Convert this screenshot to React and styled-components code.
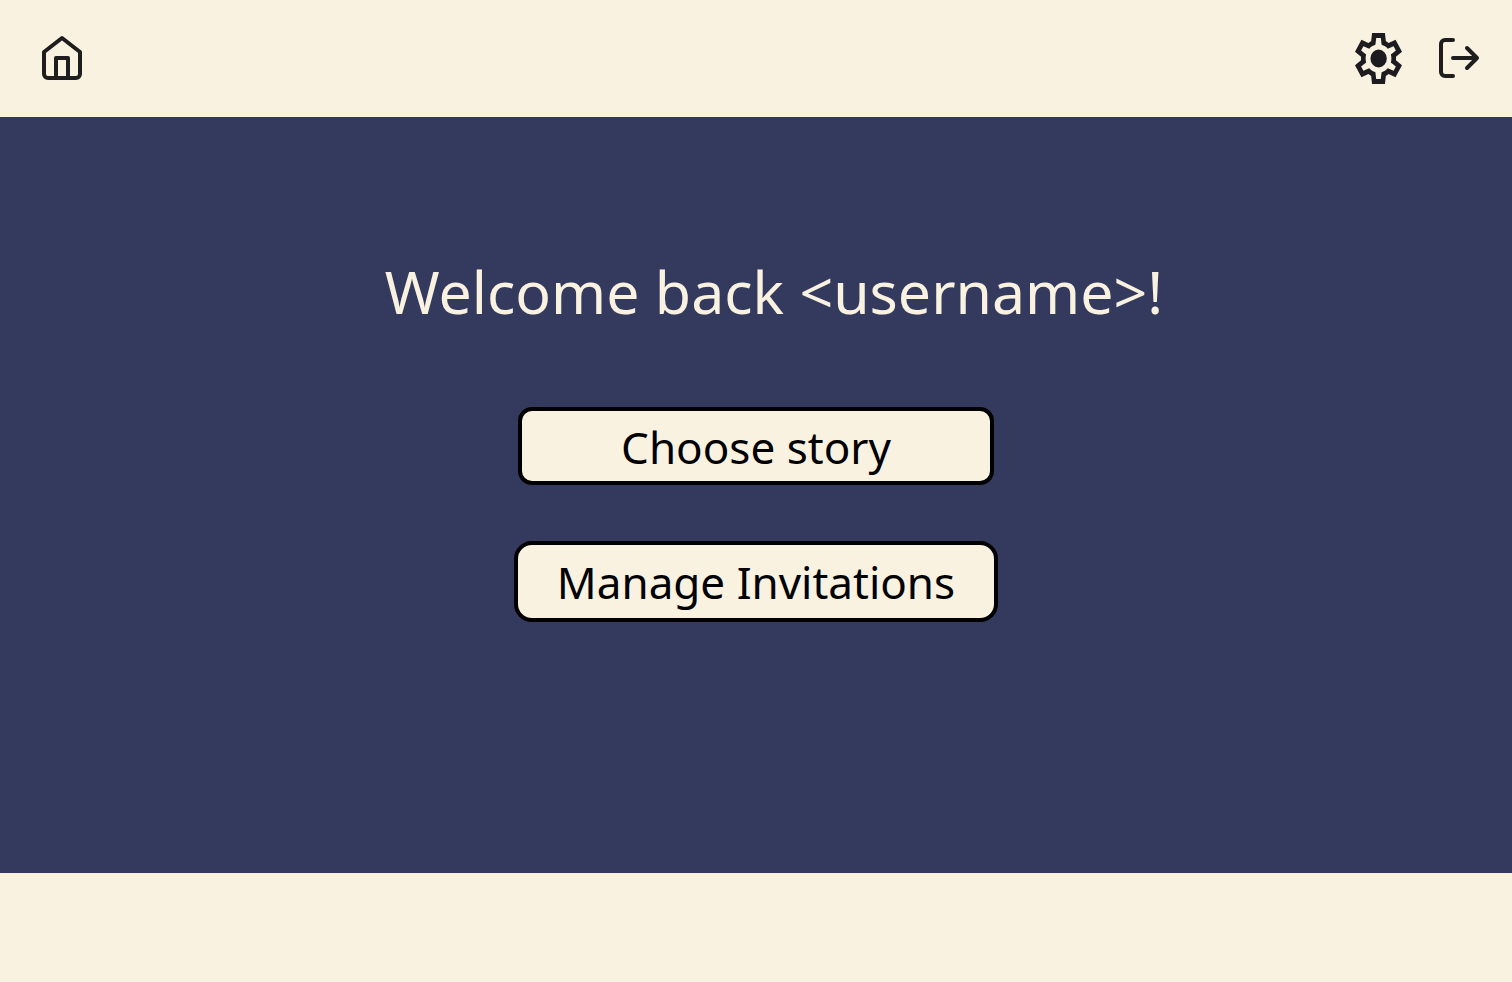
import React from "react";
import styled, { createGlobalStyle } from "styled-components";

const cream = "#f9f2e0";
const navy = "#34395e";

const GlobalStyle = createGlobalStyle`
  *, *::before, *::after { box-sizing: border-box; }
  body { margin: 0; background: ${cream}; font-family: "Noto Sans", sans-serif; }
`;

const Page = styled.div`
  display: flex;
  flex-direction: column;
  min-height: 100vh;
`;

const Header = styled.header`
  display: flex;
  align-items: center;
  justify-content: space-between;
  padding: 33px 29px 33px 38px;
  background: ${cream};
`;

const Actions = styled.nav`
  display: flex;
  align-items: center;
  gap: 33px;
`;

const IconButton = styled.button`
  display: flex;
  padding: 0;
  border: 0;
  background: none;
  color: ${(p) => p.$color || "#1e1e1e"};
  cursor: pointer;
`;

const LineIcon = styled.svg`
  width: 48px;
  height: 48px;
  margin-bottom: 1px;
  fill: none;
  stroke: currentColor;
  stroke-width: 2;
  stroke-linecap: round;
  stroke-linejoin: round;
`;

const GearIcon = styled.svg`
  width: 47px;
  height: 51px;
  fill: currentColor;
`;

const Main = styled.main`
  flex: 1;
  display: flex;
  flex-direction: column;
  align-items: center;
  padding: 135px 24px 96px;
  background: ${navy};
`;

const Title = styled.h1`
  margin: 0;
  padding-left: 36px;
  color: ${cream};
  font-size: 59px;
  font-weight: 400;
  line-height: 78px;
  text-align: center;
`;

const Menu = styled.div`
  display: flex;
  flex-direction: column;
  align-items: center;
  gap: 56px;
  margin-top: 77px;
  max-width: 100%;
`;

const MenuButton = styled.button`
  width: ${(p) => (p.$large ? 484 : 476)}px;
  max-width: 100%;
  padding: ${(p) => (p.$large ? "9px 16px 8px" : "8px 16px 6px")};
  border: 4px solid #000;
  border-radius: ${(p) => (p.$large ? 18 : 14)}px;
  background: ${cream};
  color: #000;
  font-family: inherit;
  font-size: 44px;
  line-height: 56px;
  white-space: nowrap;
  cursor: pointer;
`;

const Footer = styled.footer`
  min-height: 109px;
  background: ${cream};
`;

export default function App() {
  return (
    <Page>
      <GlobalStyle />
      <Header>
        <IconButton type="button" aria-label="Home">
          <LineIcon viewBox="0 0 24 24" aria-hidden="true">
            <path d="M3 9l9-7 9 7v11a2 2 0 0 1-2 2H5a2 2 0 0 1-2-2z" />
            <path d="M9 22V12h6v10" />
          </LineIcon>
        </IconButton>
        <Actions>
          <IconButton type="button" aria-label="Settings" $color="#1d1b20">
            <GearIcon viewBox="78 -880 804 800" preserveAspectRatio="none" aria-hidden="true">
              <path d="m370-80-16-128q-13-5-24.5-12T307-235l-119 50L78-375l103-78q-1-7-1-13.5v-27q0-6.5 1-13.5L78-585l110-190 119 50q11-8 23-15t24-12l16-128h220l16 128q13 5 24.5 12t22.5 15l119-50 110 190-103 78q1 7 1 13.5v27q0 6.5-2 13.5l103 78-110 190-118-50q-11 8-23 15t-24 12L590-80H370Zm70-80h79l14-106q31-8 57.5-23.5T639-327l99 41 39-68-86-65q5-14 7-29.5t2-31.5q0-16-2-31.5t-7-29.5l86-65-39-68-99 42q-22-23-48.5-38.5T533-694l-13-106h-79l-14 106q-31 8-57.5 23.5T321-633l-99-41-39 68 86 64q-5 15-7 30t-2 32q0 16 2 31t7 30l-86 65 39 68 99-42q22 23 48.5 38.5T427-266l13 106Zm42-180q58 0 99-41t41-99q0-58-41-99t-99-41q-59 0-99.5 41T342-480q0 58 40.5 99t99.5 41Z" />
            </GearIcon>
          </IconButton>
          <IconButton type="button" aria-label="Log out">
            <LineIcon viewBox="0 0 24 24" aria-hidden="true">
              <path d="M9 21H5a2 2 0 0 1-2-2V5a2 2 0 0 1 2-2h4" />
              <path d="M16 17l5-5-5-5M21 12H9" />
            </LineIcon>
          </IconButton>
        </Actions>
      </Header>
      <Main>
        <Title>Welcome back &lt;username&gt;!</Title>
        <Menu>
          <MenuButton type="button">Choose story</MenuButton>
          <MenuButton type="button" $large>Manage Invitations</MenuButton>
        </Menu>
      </Main>
      <Footer />
    </Page>
  );
}
